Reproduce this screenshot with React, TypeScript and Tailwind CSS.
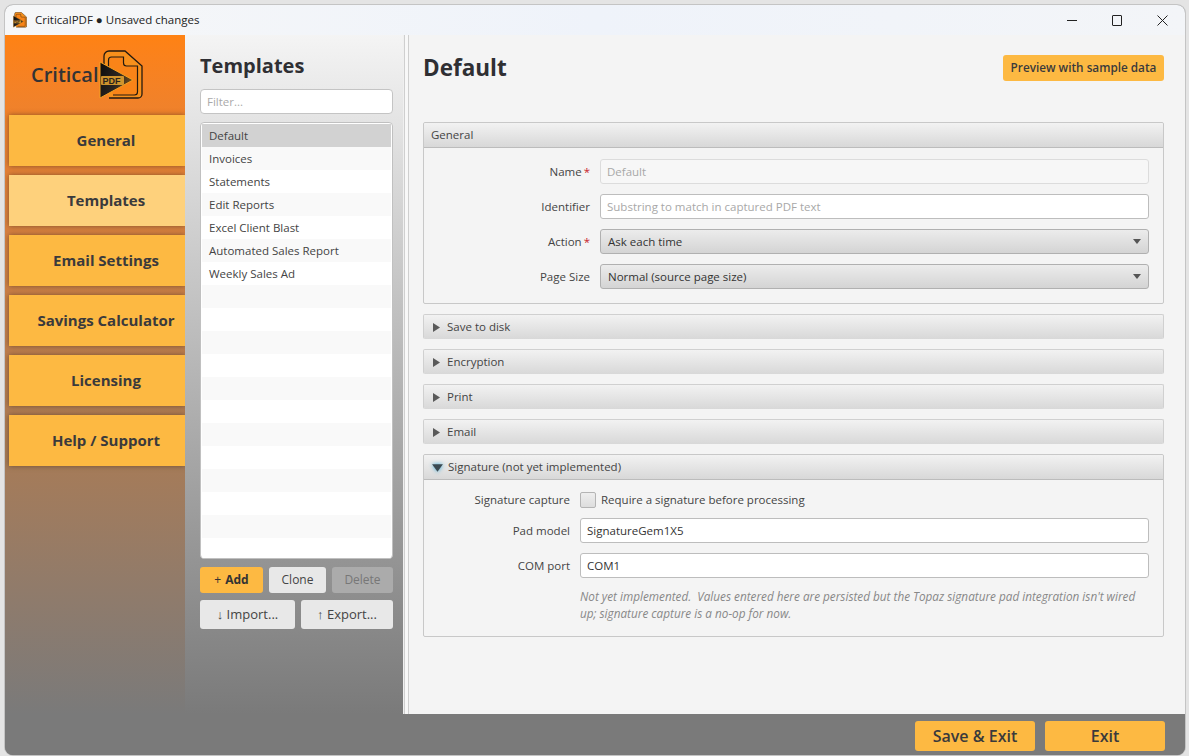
import React from 'react';

const NAV = ['General', 'Templates', 'Email Settings', 'Savings Calculator', 'Licensing', 'Help / Support'];
const TEMPLATES = ['Default', 'Invoices', 'Statements', 'Edit Reports', 'Excel Client Blast', 'Automated Sales Report', 'Weekly Sales Ad'];

function LogoIcon({ className }: { className?: string }) {
  return (
    <svg viewBox="0 0 44 50" className={className}>
      <defs>
        <linearGradient id="playFill" x1="0" y1="0" x2="1" y2="0.4">
          <stop offset="0" stopColor="#0c0c0c" />
          <stop offset="0.6" stopColor="#2a2420" />
          <stop offset="1" stopColor="#6b4a1c" />
        </linearGradient>
      </defs>
      <path d="M5 20V6a5 5 0 0 1 5-5h16l17 15v28a4 4 0 0 1-4 4H10" fill="#f7901c" stroke="#241a10" strokeWidth="1.3" />
      <path d="M9.5 20V10a3 3 0 0 1 3-3h12v6a3 3 0 0 0 3 3h11v26a3 3 0 0 1-3 3H14" fill="#f98418" stroke="#241a10" strokeWidth="1.2" />
      <path d="M1 12 34 30 1 48Z" fill="url(#playFill)" stroke="#f5a020" strokeWidth="1" strokeLinejoin="round" />
      <rect x="2" y="26" width="23" height="9" rx="1" fill="#e0a030" opacity="0.9" />
      <text x="3.5" y="34" fontSize="9" fontWeight="700" fontFamily="'Liberation Sans', sans-serif" fill="#2b241c">PDF</text>
    </svg>
  );
}

function Chevron({ open }: { open?: boolean }) {
  if (open) {
    return (
      <svg viewBox="0 0 12 12" className="-ml-px h-[13px] w-[13px] drop-shadow-[0_0_2px_#39a9d8]">
        <path d="M1 3h10L6 10Z" fill="#3b4a52" />
      </svg>
    );
  }
  return (
    <svg viewBox="0 0 7 9" className="ml-px h-[9px] w-[7px]">
      <path d="M0 0l7 4.5L0 9Z" fill="#5a5a5a" />
    </svg>
  );
}

function Label({ text, required, w }: { text: string; required?: boolean; w: string }) {
  return (
    <div className={`${w} shrink-0 pr-[10px] text-right text-[#444]`}>
      {text}
      {required && <span className="ml-[2px] text-[#c8232c]">*</span>}
    </div>
  );
}

function TextBox({ value, placeholder, disabled }: { value?: string; placeholder?: boolean; disabled?: boolean }) {
  return (
    <div
      className={[
        'flex h-[25px] flex-1 items-center rounded-[3px] border px-[6px]',
        disabled ? 'border-[#dcdcdc] bg-[#f7f7f7] text-[#a8a8a8]' : 'border-[#bdbdbd] bg-white',
        placeholder ? 'text-[#a8a8a8]' : disabled ? '' : 'text-[#333]',
      ].join(' ')}
    >
      {value}
    </div>
  );
}

function ComboBox({ value }: { value: string }) {
  return (
    <div className="flex h-[25px] flex-1 items-center justify-between rounded-[3px] border border-[#b0b0b0] bg-gradient-to-b from-[#ececec] to-[#d4d4d4] pl-[7px] pr-[7px] text-[#333]">
      {value}
      <svg viewBox="0 0 8 5" className="h-[5px] w-[8px]">
        <path d="M0 0h8L4 5Z" fill="#555" />
      </svg>
    </div>
  );
}

function SectionHeader({ title, open, plain }: { title: string; open?: boolean; plain?: boolean }) {
  return (
    <div className="flex h-[25px] items-center rounded-t-[2px] border-b border-[#bcbcbc] bg-gradient-to-b from-[#f2f2f2] to-[#d8d8d8] pl-[8px] text-[#444]">
      {!plain && (
        <div className={open ? 'mr-[4px]' : 'mr-[7px]'}>
          <Chevron open={open} />
        </div>
      )}
      <span className={plain ? '-ml-[1px]' : ''}>{title}</span>
    </div>
  );
}

function Collapsed({ title }: { title: string }) {
  return (
    <div className="h-[25px] overflow-hidden rounded-[2px] border-x border-t border-[#d0d0d0]">
      <SectionHeader title={title} />
    </div>
  );
}

function ListButton({ children, className }: { children: React.ReactNode; className: string }) {
  return <div className={`flex items-center justify-center rounded-[3px] ${className}`}>{children}</div>;
}

export default function App() {
  return (
    <div className="h-[756px] w-[1189px] overflow-hidden bg-[#e4e4e4] pb-px pl-[5px] pr-[4px] pt-[5px] font-['Open_Sans','Noto_Sans',sans-serif] text-[11.5px]">
      <div className="flex h-full flex-col overflow-hidden rounded-[8px] bg-[#7a7a7a] shadow-[0_0_0_1px_#c4c4c4]">
        {/* title bar */}
        <div className="flex h-[30px] shrink-0 items-center justify-between bg-gradient-to-r from-[#f6f7f8] via-[#eff3fa] to-[#f3f5f8] pl-[8px]">
          <div className="flex items-center gap-[8px] text-[#222]">
            <LogoIcon className="h-[16px] w-[14px]" />
            <span>CriticalPDF ● Unsaved changes</span>
          </div>
          <div className="flex items-center gap-[35px] pr-[17px]">
            <div className="h-px w-[10px] bg-[#222]" />
            <div className="box-content h-[9px] w-[8px] rounded-[1px] border border-[#222]" />
            <svg viewBox="0 0 11 11" className="h-[11px] w-[11px]">
              <path d="M0.5.5l10 10M10.5.5l-10 10" stroke="#222" strokeWidth="1" fill="none" />
            </svg>
          </div>
        </div>

        <div className="flex min-h-0 flex-1">
          {/* sidebar */}
          <div className="flex h-[679px] w-[180px] shrink-0 flex-col bg-gradient-to-b from-[#ff8213] via-[#a97b55] via-60% to-[#7a7a7a]">
            <div className="flex h-[80px] items-center pl-[26px]">
              <span className="text-[20px] font-semibold text-[#333335]">Critical</span>
              <LogoIcon className="-mt-[1px] ml-[1px] h-[50px] w-[44px]" />
            </div>
            <div className="flex flex-col gap-[9px] pl-[4px]">
              {NAV.map((n, i) => (
                <div
                  key={n}
                  className={[
                    'flex h-[51px] items-center justify-center pl-[18px] text-[15px] font-bold text-[#3a3a3c] shadow-[0_0_5px_rgba(70,50,30,0.6)]',
                    i === 1 ? 'bg-[#fed17c]' : 'bg-[#fdb942]',
                  ].join(' ')}
                >
                  {n}
                </div>
              ))}
            </div>
          </div>

          {/* template list */}
          <div className="flex h-[679px] w-[218px] shrink-0 flex-col bg-gradient-to-b from-[#f4f4f4] to-[#7a7a7a] pl-[15px] pr-[10px]">
            <div className="mt-[15px] text-[20px] font-bold leading-[32px] text-[#2f2f33]">Templates</div>
            <div className="mt-[7px] flex h-[25px] items-center rounded-[4px] border border-[#c4c4c4] bg-white px-[6px] text-[#aaa]">Filter...</div>
            <div className="mt-[8px] h-[437px] overflow-hidden rounded-[4px] border border-[#c0c0c0] bg-white px-px pt-[1px]">
              {Array.from({ length: 19 }).map((_, i) => (
                <div
                  key={i}
                  className={[
                    'flex h-[23px] items-center pl-[7px] text-[#444]',
                    i === 0 ? 'bg-[#d2d2d2]' : i % 2 === 1 ? 'bg-[#f9f9f9]' : 'bg-white',
                  ].join(' ')}
                >
                  {TEMPLATES[i]}
                </div>
              ))}
            </div>
            <div className="mt-[8px] flex h-[26px] gap-[6px] text-[12px]">
              <ListButton className="w-[63px] bg-[#fdb942] text-[#333]">
                + <span className="ml-[4px] font-bold">Add</span>
              </ListButton>
              <ListButton className="w-[57px] bg-[#e8e8e8] text-[#444]">Clone</ListButton>
              <ListButton className="w-[61px] bg-[#ababab] text-[#777]">Delete</ListButton>
            </div>
            <div className="mt-[7px] flex h-[29px] gap-[6px] text-[13px]">
              <ListButton className="w-[95px] bg-[#e8e8e8] text-[#444]">↓ Import...</ListButton>
              <ListButton className="w-[92px] bg-[#e8e8e8] text-[#444]">↑ Export...</ListButton>
            </div>
          </div>

          {/* splitter */}
          <div className="h-[679px] w-[6px] shrink-0 border-l border-[#f0f0f0]">
            <div className="h-full border-x border-[#cfcfcf] bg-[#f8f8f8]" />
          </div>

          {/* detail */}
          <div className="h-[679px] min-w-0 flex-1 bg-[#f4f4f4] pl-[14px] pr-[21px]">
            <div className="flex h-[87px] items-start justify-between pt-[16px]">
              <div className="mt-px text-[22.5px] font-bold leading-[32px] text-[#2f2f33]">Default</div>
              <div className="mt-[4px] flex h-[26px] w-[161px] items-center justify-center rounded-[3px] bg-[#fdb942] text-[11.75px] font-semibold text-[#3a3a3c]">
                Preview with sample data
              </div>
            </div>

            <div className="flex flex-col gap-[10px]">
              <div className="h-[182px] rounded-[2px] border border-[#c8c8c8]">
                <SectionHeader title="General" plain />
                <div className="flex flex-col gap-[10px] pr-[14px] pt-[11px]">
                  <div className="flex items-center">
                    <Label text="Name" required w="w-[176px]" />
                    <TextBox value="Default" disabled />
                  </div>
                  <div className="flex items-center">
                    <Label text="Identifier" w="w-[176px]" />
                    <TextBox value="Substring to match in captured PDF text" placeholder />
                  </div>
                  <div className="flex items-center">
                    <Label text="Action" required w="w-[176px]" />
                    <ComboBox value="Ask each time" />
                  </div>
                  <div className="flex items-center">
                    <Label text="Page Size" w="w-[176px]" />
                    <ComboBox value="Normal (source page size)" />
                  </div>
                </div>
              </div>

              <Collapsed title="Save to disk" />
              <Collapsed title="Encryption" />
              <Collapsed title="Print" />
              <Collapsed title="Email" />

              <div className="h-[183px] rounded-[2px] border border-[#c8c8c8]">
                <SectionHeader title="Signature (not yet implemented)" open />
                <div className="flex flex-col pr-[14px]">
                  <div className="flex h-[38px] items-center pt-[1px]">
                    <Label text="Signature capture" w="w-[156px]" />
                    <div className="h-[16px] w-[16px] rounded-[2px] border border-[#b4b4b4] bg-gradient-to-b from-[#eee] to-[#ddd]" />
                    <span className="ml-[5px] text-[#444]">Require a signature before processing</span>
                  </div>
                  <div className="flex items-center">
                    <Label text="Pad model" w="w-[156px]" />
                    <TextBox value="SignatureGem1X5" />
                  </div>
                  <div className="mt-[10px] flex items-center">
                    <Label text="COM port" w="w-[156px]" />
                    <TextBox value="COM1" />
                  </div>
                  <div className="ml-[156px] mt-[10px] text-[11.75px] italic leading-[17px] text-[#888]">
                    Not yet implemented.&nbsp; Values entered here are persisted but the Topaz signature pad integration isn't wired
                    <br />
                    up; signature capture is a no-op for now.
                  </div>
                </div>
              </div>
            </div>
          </div>
        </div>

        {/* footer */}
        <div className="flex h-[41px] shrink-0 justify-end gap-[10px] bg-[#7a7a7a] pr-[20px] pt-[7px]">
          <div className="flex h-[30px] w-[120px] items-center justify-center rounded-[3px] bg-[#fdb942] text-[16px] font-semibold text-[#3a3a3c]">Save &amp; Exit</div>
          <div className="flex h-[30px] w-[120px] items-center justify-center rounded-[3px] bg-[#fdb942] text-[16px] font-semibold text-[#3a3a3c]">Exit</div>
        </div>
      </div>
    </div>
  );
}
